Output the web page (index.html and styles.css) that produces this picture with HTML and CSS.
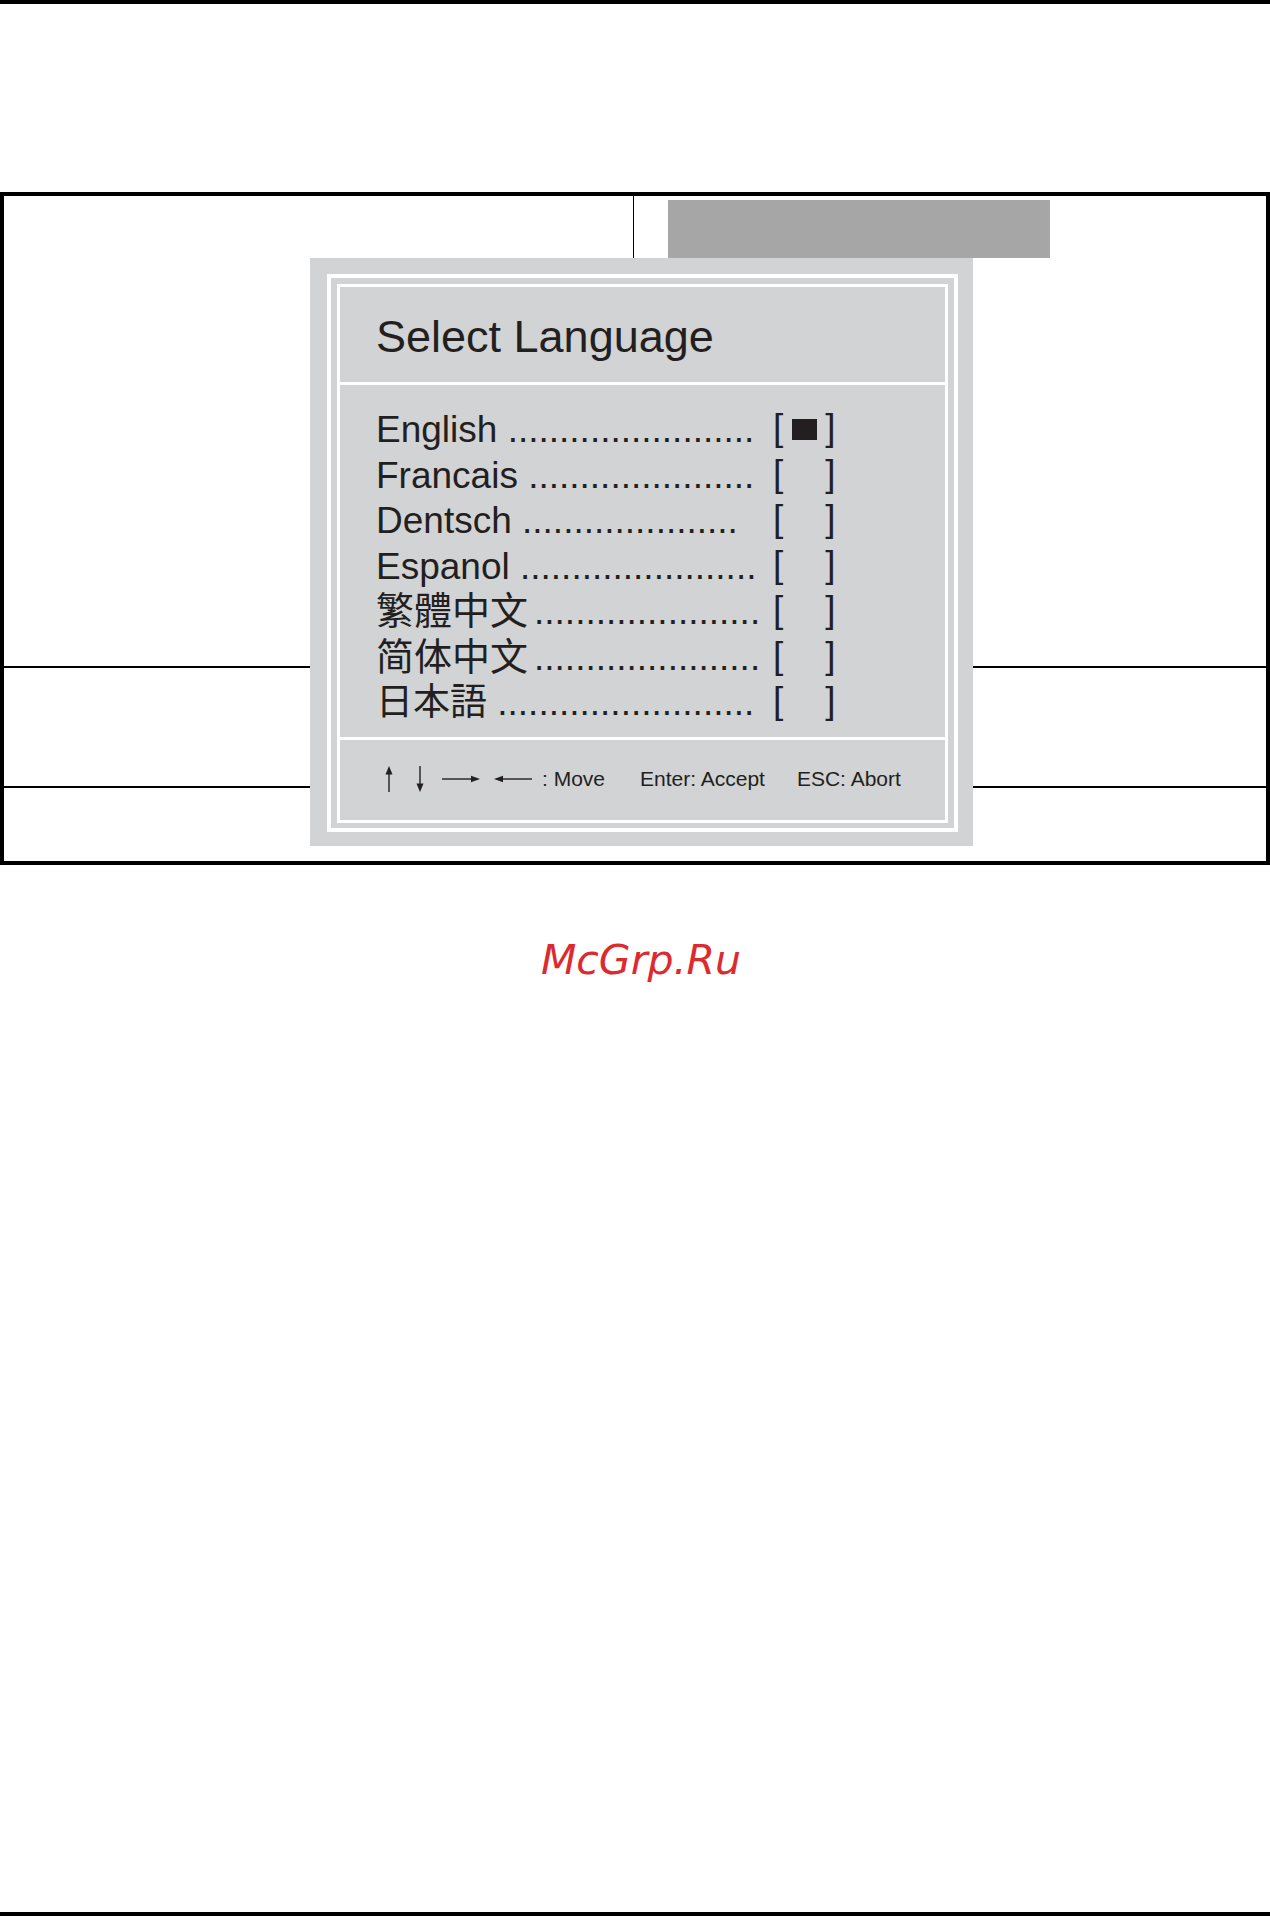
FILE: index.html
```html
<!DOCTYPE html>
<html lang="en">
<head>
<meta charset="utf-8">
<title>Select Language</title>
<link rel="stylesheet" href="styles.css">
</head>
<body>
<div class="page">
  <div class="rule rule-top"></div>

  <div class="screen">
    <div class="row row-top">
      <div class="col col-left"></div>
      <div class="col col-right"><div class="tab-bar"></div></div>
    </div>
    <div class="row row-mid"></div>
    <div class="row row-bottom"></div>

    <div class="dialog">
      <div class="frame">
        <div class="panel">
          <div class="panel-head">Select Language</div>
          <ul class="lang-list">
            <li class="lang-row">
              <span class="lang-label">English <span class="dots">........................</span></span>
              <span class="check"><span class="br">[</span><span class="slot"><span class="mark"></span></span><span class="br">]</span></span>
            </li>
            <li class="lang-row">
              <span class="lang-label">Francais <span class="dots">......................</span></span>
              <span class="check"><span class="br">[</span><span class="slot"></span><span class="br">]</span></span>
            </li>
            <li class="lang-row">
              <span class="lang-label">Dentsch <span class="dots">.....................</span></span>
              <span class="check"><span class="br">[</span><span class="slot"></span><span class="br">]</span></span>
            </li>
            <li class="lang-row">
              <span class="lang-label">Espanol <span class="dots">.......................</span></span>
              <span class="check"><span class="br">[</span><span class="slot"></span><span class="br">]</span></span>
            </li>
            <li class="lang-row">
              <span class="lang-label"><span class="cjk tc">繁體中文</span><span class="dots dots-cjk">......................</span></span>
              <span class="check"><span class="br">[</span><span class="slot"></span><span class="br">]</span></span>
            </li>
            <li class="lang-row">
              <span class="lang-label"><span class="cjk sc">简体中文</span><span class="dots dots-cjk">......................</span></span>
              <span class="check"><span class="br">[</span><span class="slot"></span><span class="br">]</span></span>
            </li>
            <li class="lang-row">
              <span class="lang-label"><span class="cjk jp">日本語</span> <span class="dots">.........................</span></span>
              <span class="check"><span class="br">[</span><span class="slot"></span><span class="br">]</span></span>
            </li>
          </ul>
          <div class="panel-foot">
            <svg class="arr arr-v" width="10" height="26" viewBox="0 0 10 26" aria-hidden="true">
              <line x1="5" y1="6" x2="5" y2="26" stroke="#231f20" stroke-width="1.4"/>
              <polygon points="1.5,8.5 5,0 8.5,8.5" fill="#231f20"/>
            </svg>
            <svg class="arr arr-down" width="10" height="26" viewBox="0 0 10 26" aria-hidden="true">
              <line x1="5" y1="0" x2="5" y2="20" stroke="#231f20" stroke-width="1.4"/>
              <polygon points="1.5,17.5 5,26 8.5,17.5" fill="#231f20"/>
            </svg>
            <svg class="arr arr-right" width="38" height="8" viewBox="0 0 38 8" aria-hidden="true">
              <line x1="0" y1="4" x2="31" y2="4" stroke="#231f20" stroke-width="1.4"/>
              <polygon points="29,0.8 38,4 29,7.2" fill="#231f20"/>
            </svg>
            <svg class="arr arr-left" width="38" height="8" viewBox="0 0 38 8" aria-hidden="true">
              <line x1="7" y1="4" x2="38" y2="4" stroke="#231f20" stroke-width="1.4"/>
              <polygon points="9,0.8 0,4 9,7.2" fill="#231f20"/>
            </svg>
            <span class="key key-move">: Move</span>
            <span class="key key-enter">Enter: Accept</span>
            <span class="key key-esc">ESC: Abort</span>
          </div>
        </div>
      </div>
    </div>
  </div>

  <div class="watermark">McGrp.Ru</div>

  <div class="rule rule-bottom"></div>
</div>
</body>
</html>
```

FILE: styles.css
```css
* {
  box-sizing: border-box;
}

html, body {
  margin: 0;
  padding: 0;
  background: #ffffff;
}

.page {
  width: 1270px;
  min-height: 1916px;
  display: flex;
  flex-direction: column;
  font-family: "Liberation Sans", Arial, sans-serif;
  color: #231f20;
}

.rule {
  height: 4px;
  background: #000000;
  width: 100%;
}

.rule-bottom {
  margin-top: auto;
}

/* BIOS screen outline */
.screen {
  position: relative;
  margin-top: 188px;
  width: 1270px;
  border: 4px solid #000000;
}

.row {
  width: 100%;
}

.row-top {
  height: 472px;
  display: grid;
  grid-template-columns: 630px 1fr;
  border-bottom: 2px solid #000000;
}

.col-left {
  border-right: 1px solid #000000;
}

.col-right {
  padding: 4px 0 0 34px;
}

.tab-bar {
  width: 382px;
  height: 58px;
  background: #a6a6a6;
}

.row-mid {
  height: 120px;
  border-bottom: 2px solid #000000;
}

.row-bottom {
  height: 73px;
}

/* dialog */
.dialog {
  position: absolute;
  left: 306px;
  top: 62px;
  width: 663px;
  height: 588px;
  background: #d1d3d4;
  padding: 16px 15px 14px 17px;
}

.frame {
  border: 4px solid #ffffff;
  padding: 6px 6px 5px 6px;
  height: 100%;
}

.panel {
  border: 3px solid #ffffff;
  height: 100%;
  display: flex;
  flex-direction: column;
}

.panel-head {
  height: 98px;
  flex: none;
  border-bottom: 3px solid #ffffff;
  display: flex;
  align-items: center;
  padding-left: 36px;
  padding-top: 5px;
  font-size: 45px;
  color: #231f20;
}

.lang-list {
  list-style: none;
  margin: 0;
  padding: 22px 0 0 36px;
  height: 355px;
  flex: none;
  border-bottom: 3px solid #ffffff;
}

.lang-row {
  display: grid;
  grid-template-columns: 397px 70px;
  height: 45.5px;
  line-height: 45.5px;
  font-size: 37px;
  white-space: nowrap;
}

.lang-label {
  overflow: hidden;
}

.cjk {
  font-size: 38px;
}

.cjk.tc {
  font-family: "Liberation Sans", "Noto Sans CJK TC", sans-serif;
}

.cjk.sc {
  font-family: "Liberation Sans", "Noto Sans CJK SC", sans-serif;
}

.cjk.jp {
  font-family: "Liberation Sans", "Noto Sans CJK JP", sans-serif;
  font-size: 37px;
}

.dots-cjk {
  margin-left: 6px;
}

.check {
  display: flex;
  align-items: center;
}

.br {
  display: block;
  line-height: 45.5px;
  position: relative;
  top: -2px;
}

.slot {
  width: 42px;
  display: flex;
  justify-content: center;
  align-items: center;
}

.mark {
  display: block;
  width: 25px;
  height: 21px;
  background: #231f20;
}

.panel-foot {
  flex: 1;
  display: flex;
  align-items: center;
  padding: 0 0 3px 44px;
  font-size: 21px;
}

.arr {
  display: block;
  flex: none;
}

.arr-down {
  margin-left: 21px;
}

.arr-right {
  margin-left: 17px;
}

.arr-left {
  margin-left: 14px;
}

.key-move {
  margin-left: 10px;
}

.key-enter {
  margin-left: 35px;
}

.key-esc {
  margin-left: 32px;
}

/* watermark */
.watermark {
  margin-top: 71px;
  height: 48px;
  line-height: 48px;
  text-align: center;
  padding-left: 12px;
  font-family: "DejaVu Sans", sans-serif;
  font-style: italic;
  font-size: 41px;
  color: #dc2a2e;
}
```
